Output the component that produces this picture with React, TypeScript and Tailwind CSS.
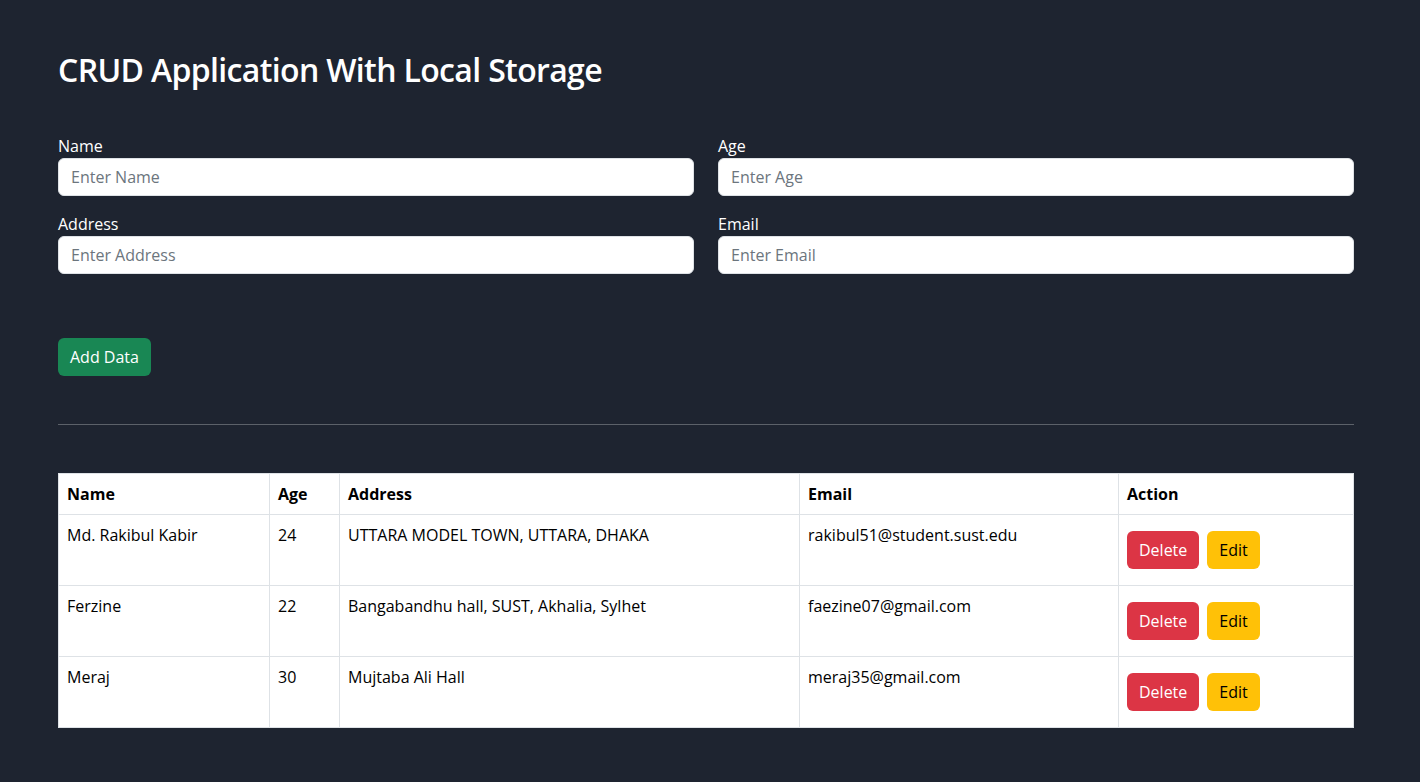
import React from "react";

const rows = [
  {
    name: "Md. Rakibul Kabir",
    age: "24",
    address: "UTTARA MODEL TOWN, UTTARA, DHAKA",
    email: "rakibul51@student.sust.edu",
  },
  {
    name: "Ferzine",
    age: "22",
    address: "Bangabandhu hall, SUST, Akhalia, Sylhet",
    email: "faezine07@gmail.com",
  },
  {
    name: "Meraj",
    age: "30",
    address: "Mujtaba Ali Hall",
    email: "meraj35@gmail.com",
  },
];

const Field = ({ label, placeholder }: { label: string; placeholder: string }) => (
  <div className="flex flex-col">
    <label className="text-white text-base leading-6">{label}</label>
    <input
      type="text"
      placeholder={placeholder}
      className="h-[38px] bg-white rounded-md border border-[#dee2e6] px-3 text-base text-[#212529] placeholder:text-[#6c757d] outline-none"
    />
  </div>
);

const App = () => {
  return (
    <div className="min-h-[782px] bg-[#1e2430] font-['Open_Sans',sans-serif]">
      <div className="ml-[58px] w-[1296px] pt-[51px]">
        <h2 className="text-white text-[32px] font-semibold leading-[38px] tracking-[-0.65px]">
          CRUD Application With Local Storage
        </h2>

        <div className="grid grid-cols-2 gap-x-6 gap-y-4 mt-[45px]">
          <Field label="Name" placeholder="Enter Name" />
          <Field label="Age" placeholder="Enter Age" />
          <Field label="Address" placeholder="Enter Address" />
          <Field label="Email" placeholder="Enter Email" />
        </div>

        <button className="mt-16 h-[38px] px-3 rounded-md bg-[#198754] text-white text-base">
          Add Data
        </button>

        <hr className="mt-12 border-t border-[#5c6169]" />

        <table className="mt-12 w-full bg-white text-black text-base border-collapse border border-[#dee2e6]">
          <thead>
            <tr className="text-left">
              <th className="w-[211px] border border-[#dee2e6] px-2 py-2 leading-6 font-bold">Name</th>
              <th className="w-[70px] border border-[#dee2e6] px-2 py-2 leading-6 font-bold">Age</th>
              <th className="w-[460px] border border-[#dee2e6] px-2 py-2 leading-6 font-bold">Address</th>
              <th className="w-[319px] border border-[#dee2e6] px-2 py-2 leading-6 font-bold">Email</th>
              <th className="border border-[#dee2e6] px-2 py-2 leading-6 font-bold">Action</th>
            </tr>
          </thead>
          <tbody>
            {rows.map((r) => (
              <tr key={r.email}>
                <td className="border border-[#dee2e6] px-2 py-2 leading-6 align-top">{r.name}</td>
                <td className="border border-[#dee2e6] px-2 py-2 leading-6 align-top">{r.age}</td>
                <td className="border border-[#dee2e6] px-2 py-2 leading-6 align-top">{r.address}</td>
                <td className="border border-[#dee2e6] px-2 py-2 leading-6 align-top">{r.email}</td>
                <td className="border border-[#dee2e6] px-2 py-2 leading-6 align-top">
                  <div className="flex gap-2 my-2">
                    <button className="h-[38px] px-3 rounded-md bg-[#dc3545] text-white">Delete</button>
                    <button className="h-[38px] px-3 rounded-md bg-[#ffc107] text-black">Edit</button>
                  </div>
                </td>
              </tr>
            ))}
          </tbody>
        </table>
      </div>
    </div>
  );
};

export default App;
